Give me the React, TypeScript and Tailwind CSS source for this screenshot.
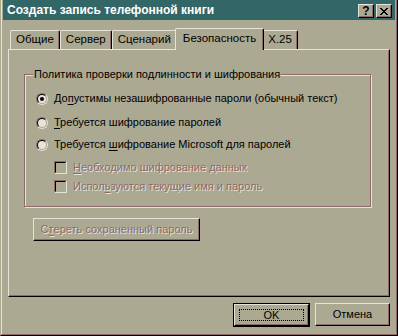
import React from 'react';

const FONT = { fontFamily: '"Liberation Sans", Arial, sans-serif' };

function Underlined({ text, at }: { text: string; at: number }) {
  return (
    <>
      {text.slice(0, at)}
      <span className="underline underline-offset-[2px]">{text[at]}</span>
      {text.slice(at + 1)}
    </>
  );
}

function Radio({ checked, label }: { checked?: boolean; label: React.ReactNode }) {
  return (
    <div className="flex items-center h-[13px]">
      <div className="w-[12px] h-[12px] rounded-full border border-t-[#8e6a6a] border-l-[#8e6a6a] border-b-[#e6e4da] border-r-[#e6e4da]">
        <div className="w-full h-full rounded-full border border-t-black border-l-black border-b-[#aca993] border-r-[#aca993] bg-[#e6e4da] flex items-center justify-center">
          {checked && <div className="w-[4px] h-[4px] rounded-full bg-black" />}
        </div>
      </div>
      <span className="ml-[6px] text-black">{label}</span>
    </div>
  );
}

function Check({ label }: { label: React.ReactNode }) {
  return (
    <div className="flex items-center h-[13px]">
      <div className="w-[13px] h-[13px] border border-t-[#8e6a6a] border-l-[#8e6a6a] border-b-[#e6e4da] border-r-[#e6e4da]">
        <div className="w-full h-full border border-t-black border-l-black border-b-[#aca993] border-r-[#aca993]" />
      </div>
      <span className="ml-[6px] text-[#8e6a6a] [text-shadow:1px_1px_0_#e6e4da]">{label}</span>
    </div>
  );
}

function Tab({ label, active }: { label: string; active?: boolean }) {
  if (active) {
    return (
      <div className="relative z-10 -mx-[2px] -mb-[1px] h-[22px] px-[7px] bg-[#aca993] border-t border-l border-t-[#e6e4da] border-l-[#e6e4da] border-r border-r-black shadow-[inset_-1px_0_0_#8e6a6a] rounded-t-[2px] flex items-start pt-[4px] text-[11.5px]">
        {label}
      </div>
    );
  }
  return (
    <div className="mt-[2px] h-[19px] px-[5px] border-t border-l border-t-[#e6e4da] border-l-[#e6e4da] border-r border-r-black shadow-[inset_-1px_0_0_#8e6a6a] rounded-t-[2px] flex items-center text-[11.5px]">
      {label}
    </div>
  );
}

function Button({ children, dflt, disabled, className }: { children: React.ReactNode; dflt?: boolean; disabled?: boolean; className?: string }) {
  const inner = (
    <div className="w-full h-full border border-t-[#e6e4da] border-l-[#e6e4da] border-b-black border-r-black shadow-[inset_-1px_-1px_0_#8e6a6a] flex items-center justify-center">
      {dflt ? (
        <div className="w-[calc(100%-8px)] h-[calc(100%-8px)] border border-dotted border-black flex items-center justify-center">{children}</div>
      ) : (
        children
      )}
    </div>
  );
  return (
    <div className={`${className ?? ''} ${dflt ? 'border border-black' : ''} ${disabled ? 'text-[#8e6a6a] [text-shadow:1px_1px_0_#e6e4da]' : 'text-black'}`}>
      {inner}
    </div>
  );
}

export default function App() {
  return (
    <div className="w-[398px] h-[336px] bg-[#aca993] text-[11px] leading-none select-none" style={FONT}>
      <div className="w-full h-full border-l border-r border-b border-l-[#aca993] border-r-black border-b-black">
        <div className="w-full h-full border-l border-r border-b border-l-[#e6e4da] border-r-[#8e6a6a] border-b-[#8e6a6a] px-[1px] flex flex-col">
          {/* title bar */}
          <div className="h-[20px] bg-[#336666] flex items-center pl-[4px] pr-[3px]">
            <span className="text-white font-bold text-[12px]">Создать запись телефонной книги</span>
            <div className="ml-auto flex gap-[2px] mt-[2px]">
              <div className="w-[16px] h-[14px] bg-[#aca993] border border-t-[#e6e4da] border-l-[#e6e4da] border-b-black border-r-black shadow-[inset_-1px_-1px_0_#8e6a6a] flex items-center justify-center font-bold text-[12px] text-black">?</div>
              <div className="w-[16px] h-[14px] bg-[#aca993] border border-t-[#e6e4da] border-l-[#e6e4da] border-b-black border-r-black shadow-[inset_-1px_-1px_0_#8e6a6a] flex items-center justify-center">
                <svg width="8" height="7" viewBox="0 0 8 7" shapeRendering="crispEdges">
                  <path d="M0 0h2v1H0zM6 0h2v1H6zM1 1h2v1H1zM5 1h2v1H5zM2 2h4v1H2zM3 3h2v1H3zM2 4h4v1H2zM1 5h2v1H1zM5 5h2v1H5zM0 6h2v1H0zM6 6h2v1H6z" fill="#000" />
                </svg>
              </div>
            </div>
          </div>

          {/* tabs + panel */}
          <div className="mt-[8px] mx-[5px] flex flex-col">
            <div className="flex pl-[2px] h-[21px] items-end">
              <Tab label="Общие" />
              <Tab label="Сервер" />
              <Tab label="Сценарий" />
              <Tab label="Безопасность" active />
              <Tab label="X.25" />
            </div>
            <div className="h-[248px] border border-t-[#e6e4da] border-l-[#e6e4da] border-b-black border-r-black shadow-[inset_-1px_-1px_0_#8e6a6a] pt-[24px] pl-[15px] pr-[18px]">
              {/* group box */}
              <div className="relative h-[133px] border border-[#8e6a6a] shadow-[inset_1px_1px_0_#e6e4da,1px_1px_0_#e6e4da]">
                <span className="absolute -top-[6px] left-[8px] bg-[#aca993] px-[1px] text-black">Политика проверки подлинности и шифрования</span>
                <div className="pl-[11px] pt-[17px] flex flex-col">
                  <Radio checked label={<Underlined text="Допустимы незашифрованные пароли (обычный текст)" at={2} />} />
                  <div className="h-[11px]" />
                  <Radio label={<Underlined text="Требуется шифрование паролей" at={0} />} />
                  <div className="h-[9px]" />
                  <Radio label={<><span>Требуется </span><Underlined text="шифрование Microsoft для паролей" at={0} /></>} />
                  <div className="ml-[18px] mt-[10px] flex flex-col gap-[6px]">
                    <Check label={<Underlined text="Необходимо шифрование данных" at={0} />} />
                    <Check label={<Underlined text="Используются текущие имя и пароль" at={5} />} />
                  </div>
                </div>
              </div>
              <Button disabled className="mt-[11px] ml-[9px] w-[167px] h-[23px]">
                <Underlined text="Стереть сохраненный пароль" at={1} />
              </Button>
            </div>
          </div>

          {/* footer buttons */}
          <div className="mt-[6px] mr-[5px] flex justify-end gap-[5px]">
            <Button dflt className="w-[77px] h-[24px]">OK</Button>
            <Button className="w-[75px] h-[23px]">Отмена</Button>
          </div>
        </div>
      </div>
    </div>
  );
}
